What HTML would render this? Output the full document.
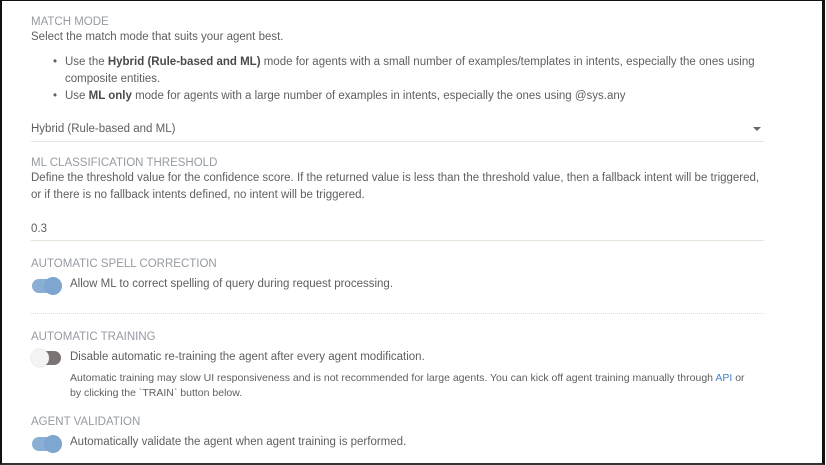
<!DOCTYPE html><html><head><style>
body{margin:0;width:826px;height:465px;overflow:hidden;background:#fff;font-family:"Liberation Sans",sans-serif;position:relative}
.frame{position:absolute;left:0;top:0;border-left:2px solid #111;border-right:3px solid #111;border-bottom:2px solid #333;border-top:1px solid #111;box-sizing:border-box;width:825px;height:465px}
.t{position:absolute;white-space:nowrap;font-size:11.5px;line-height:14px;color:#5f5f5f}
.h{color:#969ba2;font-size:11.5px}
.s{font-size:10.5px}
b{color:#4a4a4a}
.line{position:absolute;left:31px;width:733px;height:1px;background:#e8e2da}
.tog{position:absolute;left:32px;width:30px;height:14px;border-radius:7px;background:#8aaed4}
.tog::after{content:"";position:absolute;right:0;top:-2px;width:18px;height:18px;border-radius:50%;background:#7fa6d0}
.off{background:#7a7474}
.off::after{left:-2px;right:auto;background:#f4f4f4;box-shadow:0 0 1px #aaa}
</style></head><body>
<div class="frame"></div>
<div class="t h" style="left:31px;top:15px">MATCH MODE</div>
<div class="t" style="left:31px;top:30px">Select the match mode that suits your agent best.</div>
<div class="t" style="left:53px;top:55px">•</div>
<div class="t" style="left:65px;top:55px">Use the <b>Hybrid (Rule-based and ML)</b> mode for agents with a small number of examples/templates in intents, especially the ones using</div>
<div class="t" style="left:65px;top:72px">composite entities.</div>
<div class="t" style="left:53px;top:89px">•</div>
<div class="t" style="left:65px;top:89px">Use <b>ML only</b> mode for agents with a large number of examples in intents, especially the ones using @sys.any</div>
<div class="t" style="left:31px;top:122px">Hybrid (Rule-based and ML)</div>
<div style="position:absolute;left:753px;top:127px;border-left:4px solid transparent;border-right:4px solid transparent;border-top:4px solid #666"></div>
<div class="line" style="top:141px"></div>
<div class="t h" style="left:31px;top:156px">ML CLASSIFICATION THRESHOLD</div>
<div class="t" style="left:31px;top:171px">Define the threshold value for the confidence score. If the returned value is less than the threshold value, then a fallback intent will be triggered,</div>
<div class="t" style="left:31px;top:188px">or if there is no fallback intents defined, no intent will be triggered.</div>
<div class="t" style="left:31px;top:222px">0.3</div>
<div class="line" style="top:240px"></div>
<div class="t h" style="left:31px;top:257px">AUTOMATIC SPELL CORRECTION</div>
<div class="tog" style="top:279px"></div>
<div class="t" style="left:70px;top:277px">Allow ML to correct spelling of query during request processing.</div>
<div class="line" style="top:313px;background:none;border-top:1px dotted #e0dccf"></div>
<div class="t h" style="left:31px;top:330px">AUTOMATIC TRAINING</div>
<div class="tog off" style="top:351px;width:28px;left:33px"></div>
<div class="t" style="left:70px;top:350px">Disable automatic re-training the agent after every agent modification.</div>
<div class="t s" style="left:70px;top:371px">Automatic training may slow UI responsiveness and is not recommended for large agents. You can kick off agent training manually through <span style="color:#4a7fc1">API</span> or</div>
<div class="t s" style="left:70px;top:386px">by clicking the `TRAIN` button below.</div>
<div class="t h" style="left:31px;top:415px">AGENT VALIDATION</div>
<div class="tog" style="top:437px"></div>
<div class="t" style="left:70px;top:435px">Automatically validate the agent when agent training is performed.</div>
</body></html>
